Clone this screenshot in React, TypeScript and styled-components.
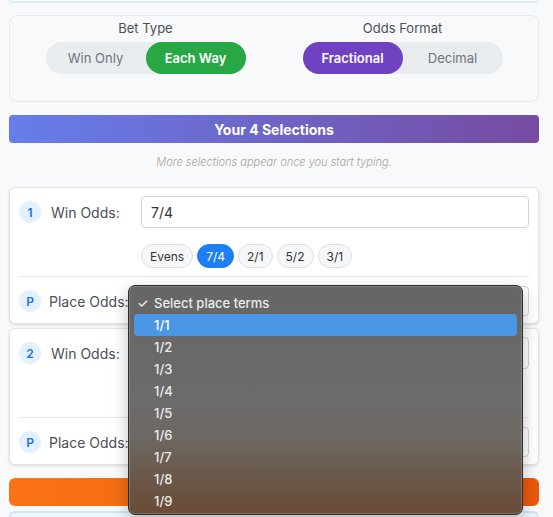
import React from 'react';
import styled, { createGlobalStyle } from 'styled-components';

const GlobalStyle = createGlobalStyle`
  * { box-sizing: border-box; }
  body {
    margin: 0;
    background: #f8f9fa;
    font-family: Inter, "Open Sans", "Liberation Sans", sans-serif;
    overflow: hidden;
  }
`;

const Page = styled.div`
  position: relative;
  width: 553px;
  height: 517px;
  padding: 0 14px 0 9px;
  display: flex;
  flex-direction: column;
  overflow: hidden;
`;

const TopStub = styled.div`
  height: 3px;
  flex-shrink: 0;
  background: #fff;
  border: 2px solid #deedfc;
  border-top: none;
  border-radius: 0 0 6px 6px;
`;

const SettingsCard = styled.div`
  margin-top: 12px;
  height: 87px;
  flex-shrink: 0;
  background: #f8f9fa;
  border: 1px solid #e6e9ed;
  border-radius: 8px;
  padding: 2px 16px 0;
  display: grid;
  grid-template-columns: 1fr 1fr;
  column-gap: 18px;
`;

const SettingGroup = styled.div`
  display: flex;
  flex-direction: column;
  align-items: center;
`;

const SettingLabel = styled.div`
  font-size: 13px;
  line-height: 18px;
  color: #495057;
  margin-top: 1px;
  margin-bottom: 5px;
`;

const Toggle = styled.div`
  display: flex;
  width: 200px;
  height: 32px;
  background: #e9ecef;
  border-radius: 16px;
`;

const ToggleOption = styled.div<{ $active?: boolean; $color?: string }>`
  flex: 1;
  display: flex;
  align-items: center;
  justify-content: center;
  border-radius: 16px;
  font-size: 13px;
  font-weight: ${p => (p.$active ? 600 : 400)};
  color: ${p => (p.$active ? '#fff' : '#6c757d')};
  background: ${p => (p.$active ? p.$color : 'transparent')};
`;

const SectionBar = styled.div`
  margin-top: 13px;
  height: 28px;
  flex-shrink: 0;
  border-radius: 4px;
  background: linear-gradient(90deg, #667eea 0%, #764ba2 100%);
  color: #fff;
  font-size: 14px;
  font-weight: 700;
  display: flex;
  align-items: center;
  justify-content: center;
`;

const Hint = styled.div`
  margin: 12px 0 18px;
  font-size: 11px;
  line-height: 14px;
  font-style: italic;
  font-weight: 300;
  color: #a6a6a6;
  text-align: center;
`;

const SelectionCard = styled.div`
  position: relative;
  flex-shrink: 0;
  background: #fff;
  border: 1px solid #e2e2e2;
  border-radius: 6px;
  box-shadow: 0 1px 3px rgba(0, 0, 0, 0.12);
  padding: 8px 9px 7px;
  & + & {
    margin-top: 4px;
  }
`;

const Row = styled.div`
  display: flex;
  align-items: center;
  height: 32px;
`;

const PlaceRow = styled(Row)`
  height: 30px;
`;

const Badge = styled.div`
  width: 22px;
  height: 22px;
  border-radius: 50%;
  background: #e3f0fd;
  color: #1a73e8;
  font-size: 12px;
  font-weight: 600;
  display: flex;
  align-items: center;
  justify-content: center;
  flex-shrink: 0;
`;

const FieldLabel = styled.div<{ $tight?: boolean }>`
  width: 100px;
  padding-left: ${p => (p.$tight ? 8 : 10)}px;
  font-size: 14px;
  color: #4a4f55;
  flex-shrink: 0;
`;

const OddsInput = styled.div`
  flex: 1;
  height: 32px;
  border: 1px solid #cfd4da;
  border-radius: 4px;
  padding-left: 9px;
  display: flex;
  align-items: center;
  font-size: 14px;
  color: #333;
`;

const SelectBox = styled.div`
  position: relative;
  flex: 1;
  height: 30px;
  border: 1px solid #cfd4da;
  border-radius: 4px;
  background: #fff;
`;

const ChipRow = styled.div`
  margin-top: 16px;
  margin-left: 122px;
  height: 24px;
  display: flex;
  gap: 4px;
`;

const Chip = styled.div<{ $active?: boolean }>`
  height: 24px;
  padding: 0 8px;
  border-radius: 12px;
  border: 1px solid ${p => (p.$active ? '#1e7ff5' : '#dde1e5')};
  background: ${p => (p.$active ? '#1e7ff5' : '#f6f7f9')};
  color: ${p => (p.$active ? '#fff' : '#333')};
  font-size: 12px;
  display: flex;
  align-items: center;
`;

const Divider = styled.div`
  height: 1px;
  background: #e8e8e8;
  margin: 8px 0 9px;
`;

const OrangeBar = styled.div`
  margin-top: 13px;
  height: 28px;
  flex-shrink: 0;
  border-radius: 6px;
  background: linear-gradient(90deg, #f97316 0%, #ea580c 100%);
`;

const BottomBox = styled.div`
  margin-top: 5px;
  height: 40px;
  flex-shrink: 0;
  background: #eef6fe;
  border: 2px solid #cfe5fb;
  border-radius: 6px;
`;

const Dropdown = styled.div`
  position: absolute;
  left: -14px;
  top: -2px;
  width: 395px;
  height: 230px;
  z-index: 10;
  padding: 6px 5px 0;
  border-radius: 7px;
  border: 1px solid #2c2c2c;
  box-shadow: inset 0 0 0 1px rgba(255, 255, 255, 0.18), 0 6px 16px rgba(0, 0, 0, 0.25);
  background: linear-gradient(180deg, #666666 0%, #6b6b6b 50%, #6d6863 66%, #6b5a4c 82%, #6a4b36 100%);
  font-family: Inter, "Liberation Sans", sans-serif;
`;

const Option = styled.div<{ $highlight?: boolean }>`
  height: 22px;
  display: flex;
  align-items: center;
  padding-left: 3px;
  border-radius: 4px;
  font-size: 13px;
  font-weight: 500;
  color: ${p => (p.$highlight ? '#fff' : '#ececec')};
  background: ${p => (p.$highlight ? '#4a97e6' : 'transparent')};
`;

const Check = styled.span`
  width: 17px;
  font-size: 13px;
  flex-shrink: 0;
`;

const placeTerms = ['1/1', '1/2', '1/3', '1/4', '1/5', '1/6', '1/7', '1/8', '1/9'];
const quickOdds = ['Evens', '7/4', '2/1', '5/2', '3/1'];

const App: React.FC = () => {
  return (
    <>
      <GlobalStyle />
      <Page>
        <TopStub />
        <SettingsCard>
          <SettingGroup>
            <SettingLabel>Bet Type</SettingLabel>
            <Toggle>
              <ToggleOption>Win Only</ToggleOption>
              <ToggleOption $active $color="#28a745">Each Way</ToggleOption>
            </Toggle>
          </SettingGroup>
          <SettingGroup>
            <SettingLabel>Odds Format</SettingLabel>
            <Toggle>
              <ToggleOption $active $color="#6f42c1">Fractional</ToggleOption>
              <ToggleOption>Decimal</ToggleOption>
            </Toggle>
          </SettingGroup>
        </SettingsCard>

        <SectionBar>Your 4 Selections</SectionBar>
        <Hint>More selections appear once you start typing.</Hint>

        <SelectionCard>
          <Row>
            <Badge>1</Badge>
            <FieldLabel>Win Odds:</FieldLabel>
            <OddsInput>7/4</OddsInput>
          </Row>
          <ChipRow>
            {quickOdds.map(o => (
              <Chip key={o} $active={o === '7/4'}>{o}</Chip>
            ))}
          </ChipRow>
          <Divider />
          <PlaceRow>
            <Badge>P</Badge>
            <FieldLabel $tight>Place Odds:</FieldLabel>
            <SelectBox>
              <Dropdown>
                <Option>
                  <Check>✓</Check>Select place terms
                </Option>
                {placeTerms.map((t, i) => (
                  <Option key={t} $highlight={i === 0}>
                    <Check />{t}
                  </Option>
                ))}
              </Dropdown>
            </SelectBox>
          </PlaceRow>
        </SelectionCard>

        <SelectionCard>
          <Row>
            <Badge>2</Badge>
            <FieldLabel>Win Odds:</FieldLabel>
            <OddsInput />
          </Row>
          <ChipRow />
          <Divider />
          <PlaceRow>
            <Badge>P</Badge>
            <FieldLabel $tight>Place Odds:</FieldLabel>
            <SelectBox />
          </PlaceRow>
        </SelectionCard>

        <OrangeBar />
        <BottomBox />
      </Page>
    </>
  );
};

export default App;
